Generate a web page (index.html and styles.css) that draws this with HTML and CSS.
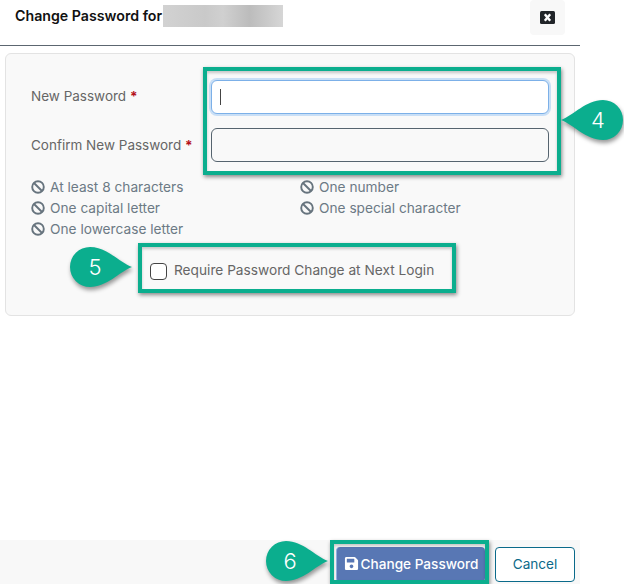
FILE: index.html
```html
<!DOCTYPE html>
<html lang="en">
<head>
<meta charset="utf-8">
<title>Change Password</title>
<link rel="stylesheet" href="styles.css">
</head>
<body>
<div class="dialog">
  <header class="head">
    <h1 class="title">Change Password for</h1>
    <div class="redacted"></div>
    <button class="close" type="button" aria-label="Close">
      <svg width="15" height="13" viewBox="0 0 15 13"><rect width="15" height="13" rx="1.5" fill="#212529"/><path d="M4.800 3.300l5.400 6.400M10.200 3.300l-5.400 6.400" stroke="#fff" stroke-width="2.400"/></svg>
    </button>
  </header>
  <main class="panel">
    <div class="field">
      <label class="label">New Password <span class="req">*</span></label>
      <div class="input focus"><span class="caret"></span></div>
    </div>
    <div class="field second">
      <label class="label">Confirm New Password <span class="req">*</span></label>
      <div class="input"></div>
    </div>
    <ul class="rules">
      <li class="rule"><svg class="ban" viewBox="0 0 14 14"><circle cx="7" cy="7" r="5.800"/><path d="M3 3l8 8"/></svg>At least 8 characters</li>
      <li class="rule"><svg class="ban" viewBox="0 0 14 14"><circle cx="7" cy="7" r="5.800"/><path d="M3 3l8 8"/></svg>One number</li>
      <li class="rule"><svg class="ban" viewBox="0 0 14 14"><circle cx="7" cy="7" r="5.800"/><path d="M3 3l8 8"/></svg>One capital letter</li>
      <li class="rule"><svg class="ban" viewBox="0 0 14 14"><circle cx="7" cy="7" r="5.800"/><path d="M3 3l8 8"/></svg>One special character</li>
      <li class="rule"><svg class="ban" viewBox="0 0 14 14"><circle cx="7" cy="7" r="5.800"/><path d="M3 3l8 8"/></svg>One lowercase letter</li>
    </ul>
    <div class="check">
      <span class="box"></span>
      <span class="check-label">Require Password Change at Next Login</span>
    </div>
  </main>
  <footer class="foot">
    <button class="btn primary" type="button">
      <svg width="15" height="15" viewBox="0 0 448 512"><path fill="#fff" d="M433.900 129.900l-83.900-83.900A48 48 0 0 0 316.100 32H48C21.500 32 0 53.500 0 80v352c0 26.500 21.500 48 48 48h352c26.500 0 48-21.500 48-48V163.900a48 48 0 0 0-14.100-34zM224 416c-35.300 0-64-28.700-64-64 0-35.300 28.700-64 64-64s64 28.700 64 64c0 35.300-28.700 64-64 64zm96-304.500V212c0 6.600-5.400 12-12 12H76c-6.600 0-12-5.400-12-12V108c0-6.600 5.400-12 12-12h228.500c3.200 0 6.200 1.300 8.500 3.500l3.500 3.500c2.200 2.300 3.500 5.300 3.500 8.500z"/></svg>
      Change Password
    </button>
    <button class="btn cancel" type="button">Cancel</button>
  </footer>
</div>

<div class="mark mark-fields"></div>
<div class="mark mark-check"></div>
<div class="mark mark-save"></div>

<div class="callout callout-4">
  <svg width="68" height="50" viewBox="0 0 68 50"><path class="drop" d="M2 23C15 18 27 3 44 3a20 20 0 0 1 0 40C27 43 15 28 2 23z"/></svg>
  <span class="num">4</span>
</div>
<div class="callout callout-5">
  <svg width="68" height="50" viewBox="0 0 68 50"><path class="drop" d="M66 23C53 18 41 3 24 3a20 20 0 0 0 0 40C41 43 53 28 66 23z"/></svg>
  <span class="num">5</span>
</div>
<div class="callout callout-6">
  <svg width="68" height="50" viewBox="0 0 68 50"><path class="drop" d="M66 23C53 18 41 3 24 3a20 20 0 0 0 0 40C41 43 53 28 66 23z"/></svg>
  <span class="num">6</span>
</div>
</body>
</html>
```

FILE: styles.css
```css
* { box-sizing: border-box; }
html, body { margin: 0; padding: 0; background: #fff; }
body {
  position: relative;
  width: 624px;
  height: 584px;
  overflow: hidden;
  font-family: "Inter", "Liberation Sans", sans-serif;
  color: #5f6468;
}
.dialog {
  width: 580px;
  height: 584px;
  display: flex;
  flex-direction: column;
}
.head {
  height: 46px;
  flex: none;
  display: flex;
  align-items: flex-start;
  padding: 5px 15px 0 15px;
  border-bottom: 1px solid #5c6670;
}
.title {
  margin: 0;
  font-size: 14.2px;
  font-weight: 600;
  line-height: 22px;
  color: #111;
  white-space: nowrap;
  width: 148px;
}
.redacted {
  width: 120px;
  height: 22px;
  background: linear-gradient(90deg, #d2d2d2 0%, #c9c9c9 35%, #d0d0d0 50%, #bcbcbc 72%, #d6d6d6 100%);
}
.close {
  margin: -5px 0 0 auto;
  width: 35px;
  height: 35px;
  padding: 0;
  border: 0;
  border-radius: 4px;
  background: #f8f8f8;
  display: flex;
  align-items: center;
  justify-content: center;
}
.panel {
  margin: 7px 5px 0 5px;
  height: 263px;
  flex: none;
  background: #f9f9f9;
  border: 1px solid #e3e3e3;
  border-radius: 6px;
  padding: 26px 25px 0 25px;
}
.field {
  display: flex;
  align-items: center;
  height: 34px;
}
.second { margin-top: 14px; }
.label {
  width: 180px;
  flex: none;
  font-size: 13.5px;
  line-height: 32px;
  align-self: flex-start;
  color: #666;
  white-space: nowrap;
}
.second .label { line-height: 34px; }
.req { color: #b5121b; font-weight: 700; }
.input {
  flex: 1;
  height: 34px;
  border: 1px solid #56646f;
  border-radius: 6px;
  background: #f9f9f9;
  display: flex;
  align-items: center;
  padding-left: 8px;
}
.input.focus {
  background: #fff;
  border-color: #7cb0e8;
  box-shadow: 0 0 0 2px #c9dff6;
}
.caret { width: 1px; height: 16px; background: #444; }
.rules {
  list-style: none;
  margin: 14px 0 0 0;
  padding: 0;
  display: grid;
  grid-template-columns: 269px 1fr;
  grid-auto-rows: 21px;
}
.rule {
  display: flex;
  align-items: center;
  gap: 5px;
  font-size: 13.7px;
  color: #6c7a85;
  white-space: nowrap;
}
.ban {
  width: 14px;
  height: 14px;
  flex: none;
  fill: none;
  stroke: #67747e;
  stroke-width: 1.9;
}
.check {
  display: flex;
  align-items: center;
  gap: 7px;
  margin: 24px 0 0 119px;
}
.box {
  width: 17px;
  height: 17px;
  border: 1px solid #444;
  border-radius: 4px;
  background: #fff;
}
.check-label { font-size: 13.7px; line-height: 15px; margin-top: -3px; color: #666; white-space: nowrap; }
.foot {
  margin-top: auto;
  height: 44px;
  flex: none;
  background: #f8f8f8;
  display: flex;
  justify-content: flex-end;
  align-items: flex-start;
  gap: 10px;
  padding: 7px 5px 0 0;
}
.btn {
  font-family: inherit;
  font-size: 13.6px;
  height: 35px;
  border-radius: 4px;
  padding: 0 0 2px 0;
}
.primary {
  width: 149px;
  background: #5877b4;
  color: #fff;
  font-weight: 500;
  border: 0;
  border-left: 1px solid #8fb0e0;
  display: flex;
  align-items: center;
  justify-content: center;
  gap: 2px;
}
.cancel {
  width: 80px;
  background: #fff;
  color: #0b6a8a;
  border: 1px solid #0b6a8a;
}
.mark {
  position: absolute;
  border: 4px solid #0bae8e;
  box-shadow: 1px 2px 4px rgba(0, 0, 0, 0.45), inset 0 2px 3px rgba(0, 0, 0, 0.2);
}
.mark-fields { left: 203px; top: 67px; width: 358px; height: 108px; }
.mark-check { left: 138px; top: 243px; width: 318px; height: 50px; }
.mark-save { left: 330px; top: 540px; width: 159px; height: 44px; }
.callout {
  position: absolute;
  width: 68px;
  height: 50px;
}
.callout svg { display: block; overflow: visible; }
.drop {
  fill: #0bae8e;
  filter: drop-shadow(1px 3px 2px rgba(0, 0, 0, 0.4));
}
.num {
  position: absolute;
  top: 3px;
  height: 40px;
  line-height: 40px;
  width: 40px;
  text-align: center;
  font-size: 22px;
  font-weight: 300;
  color: #fff;
}
.callout-4 .num { left: 19px; }
.callout-5 .num { left: 9px; }
.callout-6 .num { left: 8px; }
.callout-4 { left: 559px; top: 97px; }
.callout-5 { left: 66px; top: 244px; }
.callout-6 { left: 262px; top: 538px; }
```
